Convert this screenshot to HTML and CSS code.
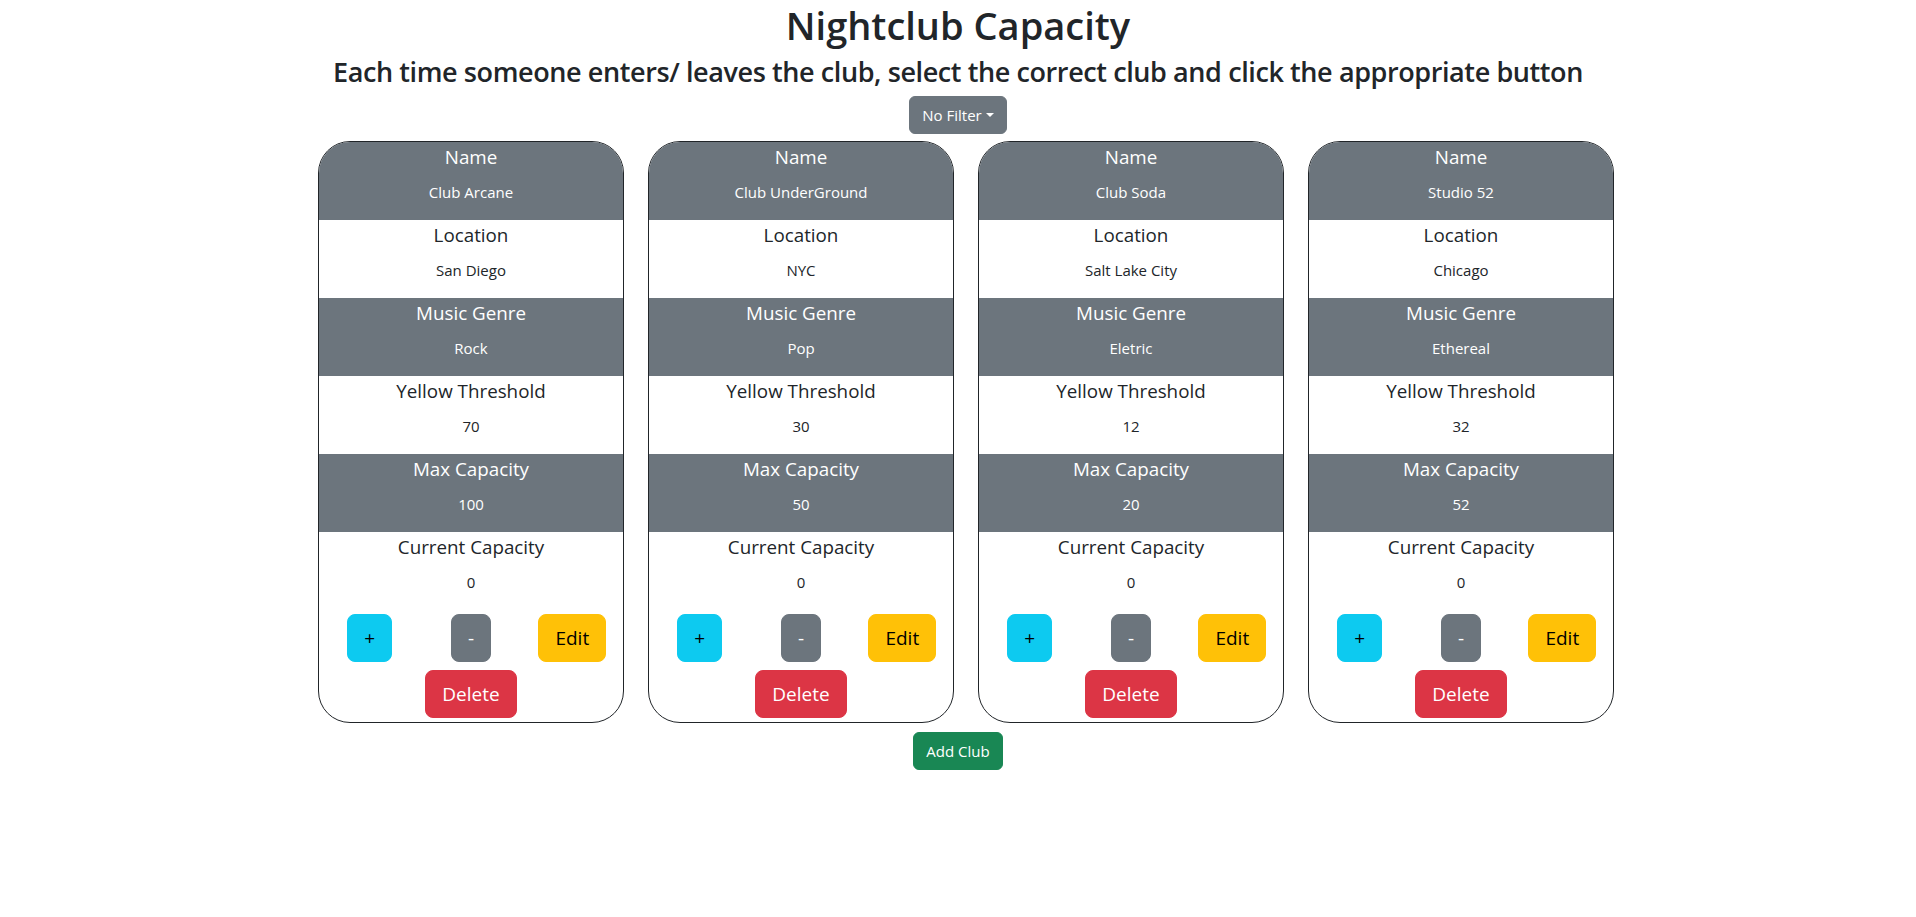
FILE: index.html
```html
<!DOCTYPE html>
<html lang="en">
<head>
<meta charset="utf-8">
<title>Nightclub Capacity</title>
<link rel="stylesheet" href="styles.css">
</head>
<body>
<div class="page">
  <h1 class="title">Nightclub Capacity</h1>
  <h3 class="subtitle">Each time someone enters/ leaves the club, select the correct club and click the appropriate button</h3>
  <div class="filter">
    <button class="btn btn-secondary dropdown-toggle">No Filter</button>
  </div>
  <div class="clubs">
    <div class="club-card">
      <div class="field shade"><p class="label">Name</p><p class="value">Club Arcane</p></div>
      <div class="field"><p class="label">Location</p><p class="value">San Diego</p></div>
      <div class="field shade"><p class="label">Music Genre</p><p class="value">Rock</p></div>
      <div class="field"><p class="label">Yellow Threshold</p><p class="value">70</p></div>
      <div class="field shade"><p class="label">Max Capacity</p><p class="value">100</p></div>
      <div class="field"><p class="label">Current Capacity</p><p class="value">0</p></div>
      <div class="actions">
        <div class="col"><button class="btn btn-lg btn-info">+</button></div>
        <div class="col"><button class="btn btn-lg btn-secondary">-</button></div>
        <div class="col"><button class="btn btn-lg btn-warning">Edit</button></div>
      </div>
      <div class="delete-row"><button class="btn btn-lg btn-danger">Delete</button></div>
    </div>
    <div class="club-card">
      <div class="field shade"><p class="label">Name</p><p class="value">Club UnderGround</p></div>
      <div class="field"><p class="label">Location</p><p class="value">NYC</p></div>
      <div class="field shade"><p class="label">Music Genre</p><p class="value">Pop</p></div>
      <div class="field"><p class="label">Yellow Threshold</p><p class="value">30</p></div>
      <div class="field shade"><p class="label">Max Capacity</p><p class="value">50</p></div>
      <div class="field"><p class="label">Current Capacity</p><p class="value">0</p></div>
      <div class="actions">
        <div class="col"><button class="btn btn-lg btn-info">+</button></div>
        <div class="col"><button class="btn btn-lg btn-secondary">-</button></div>
        <div class="col"><button class="btn btn-lg btn-warning">Edit</button></div>
      </div>
      <div class="delete-row"><button class="btn btn-lg btn-danger">Delete</button></div>
    </div>
    <div class="club-card">
      <div class="field shade"><p class="label">Name</p><p class="value">Club Soda</p></div>
      <div class="field"><p class="label">Location</p><p class="value">Salt Lake City</p></div>
      <div class="field shade"><p class="label">Music Genre</p><p class="value">Eletric</p></div>
      <div class="field"><p class="label">Yellow Threshold</p><p class="value">12</p></div>
      <div class="field shade"><p class="label">Max Capacity</p><p class="value">20</p></div>
      <div class="field"><p class="label">Current Capacity</p><p class="value">0</p></div>
      <div class="actions">
        <div class="col"><button class="btn btn-lg btn-info">+</button></div>
        <div class="col"><button class="btn btn-lg btn-secondary">-</button></div>
        <div class="col"><button class="btn btn-lg btn-warning">Edit</button></div>
      </div>
      <div class="delete-row"><button class="btn btn-lg btn-danger">Delete</button></div>
    </div>
    <div class="club-card">
      <div class="field shade"><p class="label">Name</p><p class="value">Studio 52</p></div>
      <div class="field"><p class="label">Location</p><p class="value">Chicago</p></div>
      <div class="field shade"><p class="label">Music Genre</p><p class="value">Ethereal</p></div>
      <div class="field"><p class="label">Yellow Threshold</p><p class="value">32</p></div>
      <div class="field shade"><p class="label">Max Capacity</p><p class="value">52</p></div>
      <div class="field"><p class="label">Current Capacity</p><p class="value">0</p></div>
      <div class="actions">
        <div class="col"><button class="btn btn-lg btn-info">+</button></div>
        <div class="col"><button class="btn btn-lg btn-secondary">-</button></div>
        <div class="col"><button class="btn btn-lg btn-warning">Edit</button></div>
      </div>
      <div class="delete-row"><button class="btn btn-lg btn-danger">Delete</button></div>
    </div>
  </div>
  <div class="add">
    <button class="btn btn-success">Add Club</button>
  </div>
</div>
</body>
</html>
```
FILE: styles.css
```css
* { box-sizing: border-box; }
html, body {
  margin: 0;
  padding: 0;
  background: #fff;
}
body {
  font-family: "Open Sans", "Noto Sans", sans-serif;
  font-size: 16px;
  line-height: 1.5;
  color: #212529;
}
.page {
  text-align: center;
}
.title {
  margin: 0 0 8px;
  padding-top: 2px;
  font-size: 38px;
  font-weight: 600;
  line-height: 46px;
}
.subtitle {
  margin: 0 0 8px;
  font-size: 27px;
  font-weight: 600;
  line-height: 1.2;
  letter-spacing: -0.4px;
}
.filter {
  display: flex;
  justify-content: center;
}
.btn {
  display: inline-block;
  font-family: inherit;
  font-size: 15px;
  font-weight: 400;
  line-height: 24px;
  padding: 6px 12px;
  border: 1px solid transparent;
  border-radius: 6px;
  cursor: pointer;
  text-align: center;
}
.btn-lg {
  font-size: 19px;
  line-height: 30px;
  padding: 8px 16px;
  border-radius: 8px;
}
.btn-secondary { background: #6c757d; border-color: #6c757d; color: #fff; }
.btn-info { background: #0dcaf0; border-color: #0dcaf0; color: #000; }
.btn-warning { background: #ffc107; border-color: #ffc107; color: #000; }
.btn-danger { background: #dc3545; border-color: #dc3545; color: #fff; }
.btn-success { background: #198754; border-color: #198754; color: #fff; }
.dropdown-toggle::after {
  display: inline-block;
  margin-left: 4px;
  vertical-align: 4px;
  content: "";
  border-top: 4.8px solid;
  border-right: 4.8px solid transparent;
  border-left: 4.8px solid transparent;
  border-bottom: 0;
}
.clubs {
  width: 1312px;
  margin: 7px auto 0;
  padding-left: 16px;
  display: flex;
  gap: 24px;
}
.club-card {
  width: 306px;
  flex: none;
  border: 1px solid #212529;
  border-radius: 32px;
  overflow: hidden;
  background: #fff;
  padding-bottom: 4px;
}
.field {
  height: 78px;
}
.field.shade {
  background: #6c757d;
  color: #fff;
}
.label {
  margin: 0 0 8px;
  font-size: 18.8px;
  line-height: 30px;
}
.value {
  margin: 0;
  font-size: 15px;
  line-height: 24px;
}
.actions {
  display: grid;
  grid-template-columns: 1fr 1fr 1fr;
  padding-top: 4px;
}
.col {
  display: flex;
  justify-content: center;
}
.delete-row {
  display: flex;
  justify-content: center;
  margin-top: 8px;
}
.add {
  display: flex;
  justify-content: center;
  margin-top: 9px;
}
```
